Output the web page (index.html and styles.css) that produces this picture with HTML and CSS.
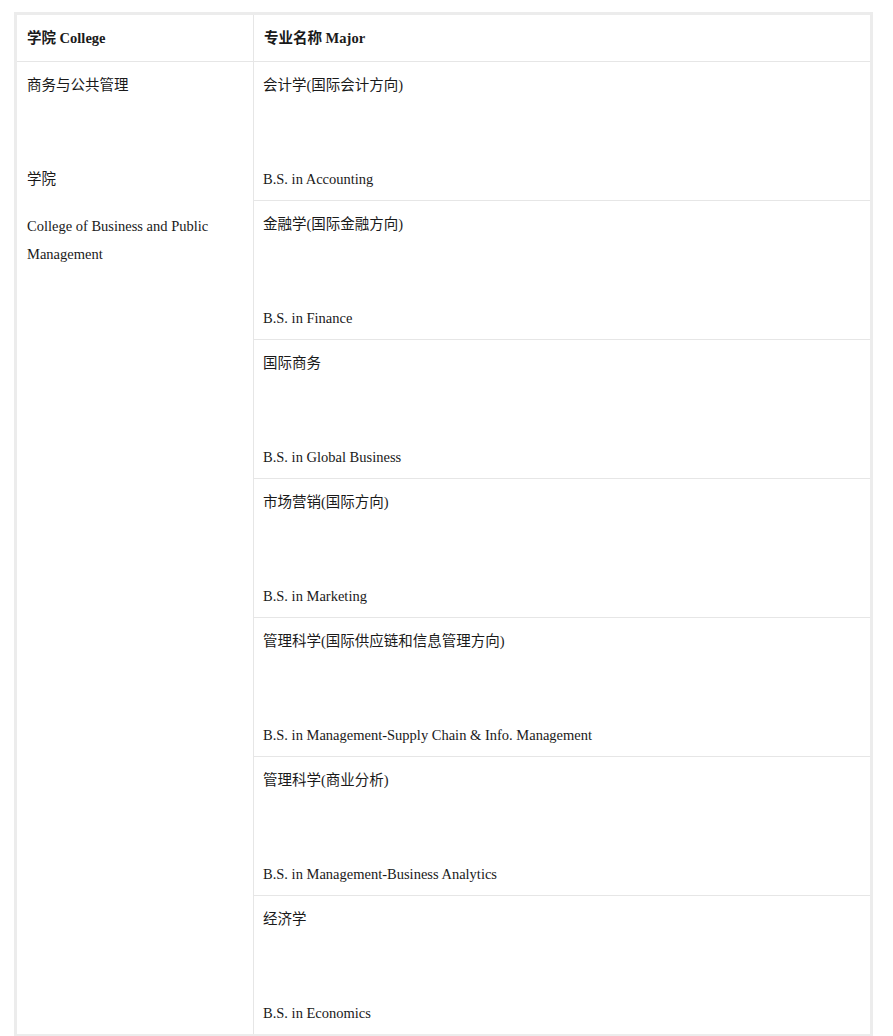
FILE: index.html
```html
<!DOCTYPE html>
<html lang="zh-CN">
<head>
  <meta charset="UTF-8">
  <meta name="viewport" content="width=device-width, initial-scale=1.0">
  <title>专业名称 Major</title>
  <link rel="stylesheet" href="styles.css">
</head>
<body>
  <!-- ======= 学院・专业一览 ======= -->
  <div class="page">
    <table class="major-table">
      <thead>
        <tr>
          <th class="col-college">学院 College</th>
          <th>专业名称 Major</th>
        </tr>
      </thead>
      <tbody>
        <tr>
          <td class="col-college" rowspan="7">
            <p>商务与公共管理</p>
            <p>&nbsp;</p>
            <p>学院</p>
            <p>College of Business and Public Management</p>
          </td>
          <td>
            <p>会计学(国际会计方向)</p>
            <p>&nbsp;</p>
            <p>B.S. in Accounting</p>
          </td>
        </tr>
        <tr>
          <td>
            <p>金融学(国际金融方向)</p>
            <p>&nbsp;</p>
            <p>B.S. in Finance</p>
          </td>
        </tr>
        <tr>
          <td>
            <p>国际商务</p>
            <p>&nbsp;</p>
            <p>B.S. in Global Business</p>
          </td>
        </tr>
        <tr>
          <td>
            <p>市场营销(国际方向)</p>
            <p>&nbsp;</p>
            <p>B.S. in Marketing</p>
          </td>
        </tr>
        <tr>
          <td>
            <p>管理科学(国际供应链和信息管理方向)</p>
            <p>&nbsp;</p>
            <p>B.S. in Management-Supply Chain &amp; Info. Management</p>
          </td>
        </tr>
        <tr>
          <td>
            <p>管理科学(商业分析)</p>
            <p>&nbsp;</p>
            <p>B.S. in Management-Business Analytics</p>
          </td>
        </tr>
        <tr>
          <td>
            <p>经济学</p>
            <p>&nbsp;</p>
            <p>B.S. in Economics</p>
          </td>
        </tr>
      </tbody>
    </table>
  </div>
</body>
</html>
```

FILE: styles.css
```css
/* ======= 基本設定 ======= */
* {
  box-sizing: border-box;
  margin: 0;
  padding: 0;
}

html, body {
  background: #fff;
  color: #1a1a1a;
  font-family: "Liberation Serif", "Noto Sans CJK SC", serif;
  font-size: 14.5px;
  line-height: 28px;
}

.page {
  padding: 12px 20px 0 14px;
}

/* ======= 表格 ======= */
.major-table {
  width: 859px;
  border-collapse: collapse;
  border: 3px solid #ececec;
}

.major-table th,
.major-table td {
  border: 1px solid #e6e6e6;
  padding: 9px 10px 7px 9px;
  text-align: left;
  vertical-align: top;
}

.major-table th {
  font-weight: 700;
  padding: 9px 10px 9px 10px;
}

.col-college {
  width: 238px;
}

.major-table td.col-college {
  padding-left: 10px;
}

.major-table p {
  margin-bottom: 19px;
}
.major-table p:last-child {
  margin-bottom: 0;
}
```
